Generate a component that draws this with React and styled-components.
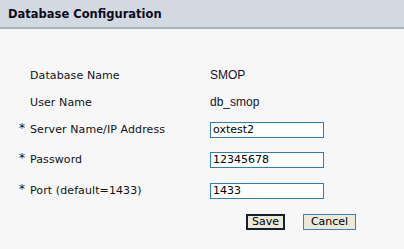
import React from 'react'
import styled, { createGlobalStyle } from 'styled-components'

const GlobalStyle = createGlobalStyle`
  html, body {
    margin: 0;
    padding: 0;
    background: #f7f7f7;
  }
  body {
    font-family: Verdana, "DejaVu Sans", sans-serif;
    font-size: 11px;
    color: #111;
  }
`

const Panel = styled.div`
  width: 404px;
  height: 249px;
  background: #f7f7f7;
  overflow: hidden;
`

const Header = styled.div`
  height: 27px;
  display: flex;
  align-items: center;
  padding-left: 8px;
  background: #d3d9e0;
  border-bottom: 2px solid #a9b1bb;
`

const Title = styled.h2`
  margin: 0;
  font-family: Verdana, "DejaVu Sans", sans-serif;
  font-size: 11.5px;
  font-weight: bold;
  color: #0b0b1c;
`

const Form = styled.div`
  display: flex;
  flex-direction: column;
  padding: 32px 0 0 18px;
`

const Row = styled.div`
  display: grid;
  grid-template-columns: 12px 180px auto;
  align-items: center;
  height: ${({ $h }) => $h}px;
`

const Star = styled.span`
  align-self: center;
  margin-top: -4px;
  padding-left: 1px;
  font-size: 12px;
  color: #111;
`

const Label = styled.span`
  font-size: 11px;
  letter-spacing: 0.1px;
  color: #111;
  white-space: nowrap;
`

const Value = styled.span`
  font-family: "Liberation Sans", Arial, sans-serif;
  font-size: 12px;
  color: #12122a;
`

const Input = styled.input`
  box-sizing: border-box;
  width: 114px;
  height: 16px;
  margin: 0;
  padding: 0 2px;
  border: 1px solid #2f7db3;
  background: #fff;
  font-family: Verdana, "DejaVu Sans", sans-serif;
  font-size: 11px;
  color: #000;
  outline: none;
`

const Buttons = styled.div`
  display: flex;
  gap: 18px;
  padding-left: 36px;
`

const Button = styled.button`
  box-sizing: border-box;
  height: 16px;
  min-width: ${({ $w }) => $w}px;
  margin: 0;
  padding: 0 4px;
  background: #ece9d8;
  border: ${({ $primary }) => ($primary ? '2px solid #14202e' : '1px solid #3a82b9')};
  font-family: Verdana, "DejaVu Sans", sans-serif;
  font-size: 11px;
  line-height: 12px;
  color: #000;
`

const fields = [
  { key: 'db', label: 'Database Name', value: 'SMOP', h: 28 },
  { key: 'user', label: 'User Name', value: 'db_smop', h: 26 },
  { key: 'server', label: 'Server Name/IP Address', input: 'oxtest2', required: true, h: 29 },
  { key: 'pass', label: 'Password', input: '12345678', required: true, h: 31 },
  { key: 'port', label: 'Port (default=1433)', input: '1433', required: true, h: 31 },
]

export default function App() {
  return (
    <Panel>
      <GlobalStyle />
      <Header>
        <Title>Database Configuration</Title>
      </Header>
      <Form>
        {fields.map(field => (
          <Row key={field.key} $h={field.h}>
            <Star>{field.required ? '*' : ''}</Star>
            <Label>{field.label}</Label>
            {field.input !== undefined
              ? <Input defaultValue={field.input} />
              : <Value>{field.value}</Value>}
          </Row>
        ))}
        <Row $h={32}>
          <span />
          <span />
          <Buttons>
            <Button $primary $w={37}>Save</Button>
            <Button $w={53}>Cancel</Button>
          </Buttons>
        </Row>
      </Form>
    </Panel>
  )
}
